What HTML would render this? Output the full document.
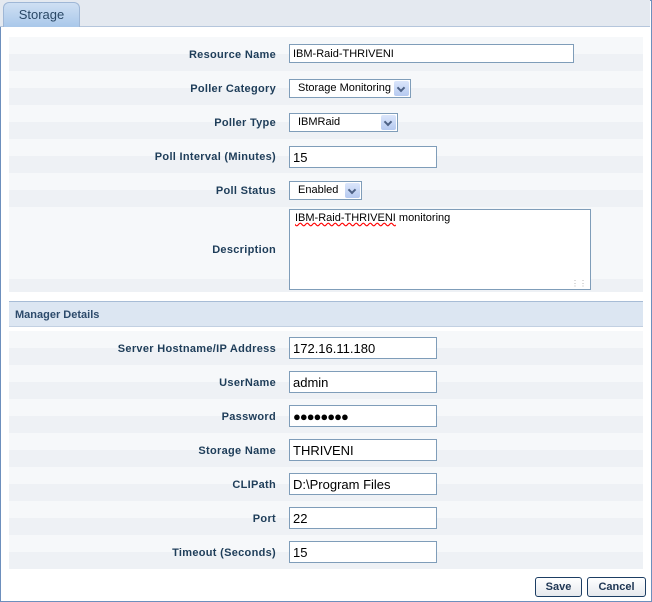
<html><head><style>
body{margin:0;width:652px;height:602px;background:#fff;font-family:"Liberation Sans",Arial,sans-serif;position:relative;overflow:hidden}
.frame{position:absolute;left:0;top:0;width:650px;height:600px;border:1px solid #6d8fbd;background:#fff}
.tabbar{position:absolute;left:0;top:0;width:650px;height:26px;background:#e4e9f0;border-bottom:1px solid #b5c6dc}
.tab{position:absolute;left:3px;top:2px;width:75px;height:24px;background:linear-gradient(#cfe0f3,#a9c8ea);border:1px solid #9fb7d6;border-bottom:none;border-radius:6px 6px 0 0;font-size:13px;color:#2a4866;text-align:center;line-height:24px}
.row{position:absolute;left:9px;width:634px;height:34px;background:linear-gradient(#f6f8fa 50%,#eef1f5 50%)}
.lbl{position:absolute;right:376px;font-size:11px;font-weight:bold;color:#1e3d59;text-align:right;white-space:nowrap;letter-spacing:0.3px}
.in{position:absolute;left:289px;height:19px;border:1px solid #7f9db9;background:#fff;font-size:13px;line-height:19px;padding-left:3px;box-sizing:border-box;color:#000}
.sel{position:absolute;left:289px;height:19px;border:1px solid #7f9db9;background:#fff;font-size:11px;line-height:17px;padding-left:8px;box-sizing:border-box}
.arr{position:absolute;right:1px;top:1px;width:15px;height:15px;background:linear-gradient(#dbe6fb,#b5c9f0);border-radius:2px}
.arr:after{content:"";position:absolute;left:4px;top:4px;width:4px;height:4px;border-right:2px solid #4d6185;border-bottom:2px solid #4d6185;transform:rotate(45deg)}
.hdr{position:absolute;left:9px;top:301px;width:634px;height:26px;background:#dce6f2;border-top:1px solid #a7bcd6;border-bottom:1px solid #c2d0e2;font-size:11px;font-weight:bold;color:#2c4a6b;line-height:26px;padding-left:6px;box-sizing:border-box}
.btn{position:absolute;top:577px;height:20px;border:1px solid #1c3d63;border-radius:3px;background:linear-gradient(#fff,#e6e9ee);font-size:11px;font-weight:bold;color:#1d3553;text-align:center;line-height:18px;box-sizing:border-box}
</style></head><body>
<div class="frame"></div>
<div class="tabbar"></div>
<div class="tab">Storage</div>

<div class="row" style="top:37px"></div>
<div class="lbl" style="top:49px">Resource Name</div>
<div class="in" style="top:44px;width:285px;font-size:11px">IBM-Raid-THRIVENI</div>

<div class="row" style="top:71px"></div>
<div class="lbl" style="top:83px">Poller Category</div>
<div class="sel" style="top:79px;width:122px">Storage Monitoring<div class="arr"></div></div>

<div class="row" style="top:105px"></div>
<div class="lbl" style="top:117px">Poller Type</div>
<div class="sel" style="top:113px;width:109px">IBMRaid<div class="arr"></div></div>

<div class="row" style="top:139px"></div>
<div class="lbl" style="top:151px">Poll Interval (Minutes)</div>
<div class="in" style="top:146px;width:148px;height:22px;line-height:21px">15</div>

<div class="row" style="top:173px"></div>
<div class="lbl" style="top:185px">Poll Status</div>
<div class="sel" style="top:181px;width:73px">Enabled<div class="arr"></div></div>

<div class="row" style="top:207px;height:85px;background:linear-gradient(#f6f8fa 85%,#eef1f5 85%)"></div>
<div class="lbl" style="top:244px">Description</div>
<div class="in" style="top:209px;width:302px;height:81px;font-size:11px;line-height:16px;padding-left:5px"><span style="text-decoration:underline wavy red">IBM-Raid-THRIVENI</span> monitoring<span style="position:absolute;right:3px;bottom:1px;color:#aaa;font-size:8px;line-height:8px">&#8942;&#8942;</span></div>

<div class="hdr">Manager Details</div>

<div class="row" style="top:331px"></div>
<div class="lbl" style="top:343px">Server Hostname/IP Address</div>
<div class="in" style="top:337px;width:148px;height:22px;line-height:21px">172.16.11.180</div>

<div class="row" style="top:365px"></div>
<div class="lbl" style="top:377px">UserName</div>
<div class="in" style="top:371px;width:148px;height:22px;line-height:21px">admin</div>

<div class="row" style="top:399px"></div>
<div class="lbl" style="top:411px">Password</div>
<div class="in" style="top:405px;width:148px;height:22px;line-height:21px;font-size:13px;letter-spacing:-1px">&#9679;&#9679;&#9679;&#9679;&#9679;&#9679;&#9679;&#9679;</div>

<div class="row" style="top:433px"></div>
<div class="lbl" style="top:445px">Storage Name</div>
<div class="in" style="top:439px;width:148px;height:22px;line-height:21px">THRIVENI</div>

<div class="row" style="top:467px"></div>
<div class="lbl" style="top:479px">CLIPath</div>
<div class="in" style="top:473px;width:148px;height:22px;line-height:21px">D:\Program Files</div>

<div class="row" style="top:501px"></div>
<div class="lbl" style="top:513px">Port</div>
<div class="in" style="top:507px;width:148px;height:22px;line-height:21px">22</div>

<div class="row" style="top:535px"></div>
<div class="lbl" style="top:547px">Timeout (Seconds)</div>
<div class="in" style="top:541px;width:148px;height:22px;line-height:21px">15</div>

<div class="btn" style="left:535px;width:47px">Save</div>
<div class="btn" style="left:587px;width:59px">Cancel</div>
</body></html>
